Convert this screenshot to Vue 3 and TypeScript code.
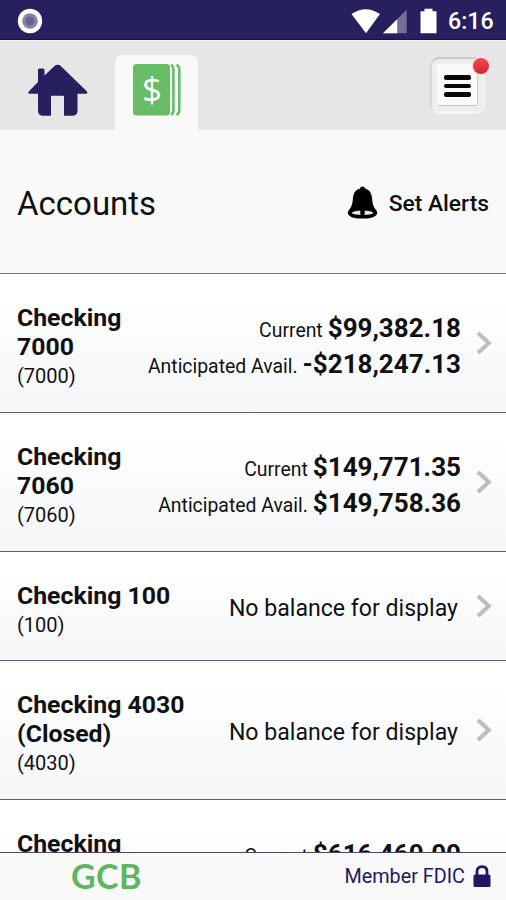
<script setup lang="ts">
interface Balance {
  label: string
  amount: string
}
interface Account {
  name: string[]
  number: string
  balances: Balance[]
}

const accounts: Account[] = [
  {
    name: ['Checking', '7000'],
    number: '(7000)',
    balances: [
      { label: 'Current', amount: '$99,382.18' },
      { label: 'Anticipated Avail.', amount: '-$218,247.13' },
    ],
  },
  {
    name: ['Checking', '7060'],
    number: '(7060)',
    balances: [
      { label: 'Current', amount: '$149,771.35' },
      { label: 'Anticipated Avail.', amount: '$149,758.36' },
    ],
  },
  { name: ['Checking 100'], number: '(100)', balances: [] },
  { name: ['Checking 4030', '(Closed)'], number: '(4030)', balances: [] },
  {
    name: ['Checking'],
    number: '',
    balances: [{ label: 'Current', amount: '$616,460.00' }],
  },
]
</script>

<template>
  <div class="screen">
    <header class="status">
      <svg class="record" width="26" height="26" viewBox="0 0 26 26">
        <circle cx="13" cy="13" r="12.2" fill="#fff" />
        <circle cx="13" cy="13" r="7.8" fill="#8984ae" />
        <circle cx="13" cy="13" r="4.5" fill="#68628f" />
      </svg>
      <svg class="signals" width="88" height="26" viewBox="0 0 88 26">
        <path d="M.5 6Q14.500-3.500 29 6L15 25.200Z" fill="#fff" />
        <path d="M55.700 1.800V25.300H32Z" fill="#767099" />
        <path d="M46.200 11.200V25.300H32Z" fill="#fff" />
        <path d="M73.500 .8h8v2.500h4v22H69.500v-22h4Z" fill="#fff" />
      </svg>
      <span class="clock">6:16</span>
    </header>

    <nav class="tabs">
      <div class="home">
        <svg width="60" height="53" viewBox="0 0 60 53">
          <path
            d="M30 .8Q31.500.8 33 2.200L59 27.500Q60 29.800 57.500 29.800H49.500V46.500Q49.500 51.800 44 51.800H36V33Q36 31.800 34.800 31.800H24.200Q23 31.800 23 33V51.800H15.500Q10 51.800 10 46.500V29.800H1.500Q-.8 29.500 1 27.200L10 18V6Q10 4.500 11.500 4.500H15Q16.500 4.500 16.500 6V11.500L26.500 2Q28 .8 30 .8Z"
            fill="#26205f"
          />
        </svg>
      </div>
      <div class="tab">
        <svg width="48" height="52" viewBox="0 0 48 52">
          <rect width="37" height="51.500" rx="3.500" fill="#67bd66" />
          <path d="M38 .8Q40.400 2 40.400 5V46.500Q40.400 49.500 38 50.700M43.500 .8Q46.300 2 46.300 5V46.500Q46.300 49.500 43.500 50.700" fill="none" stroke="#67bd66" stroke-width="2.600" />
          <text x="19" y="37.500" text-anchor="middle" class="dollar">$</text>
        </svg>
      </div>
      <div class="menu">
        <div class="menu-face"><i /><i /><i /></div>
        <span class="badge" />
      </div>
    </nav>

    <section class="heading">
      <h1>Accounts</h1>
      <div class="alerts">
        <svg width="31" height="33" viewBox="0 0 31 33">
          <path
            d="M15.500.5C14 .5 13.200 1.400 13 2.600C8 4 6.300 8 5.900 13C5.500 18 4.500 21 2 24C.6 25.700.5 27.200 1.200 28.500C3.500 31.800 9 32.600 15.500 32.600S27.500 31.800 29.800 28.500C30.500 27.200 30.400 25.700 29 24C26.500 21 25.500 18 25.100 13C24.700 8 23 4 18 2.600C17.800 1.400 17 .5 15.500.5Z"
            fill="#000"
          />
          <path d="M4.500 27Q6 24.500 15.500 24.500T26.500 27Q24.500 28.900 15.500 28.900T4.500 27Z" fill="#e8e8e8" />
          <path d="M13.300 24h4.400v4.500q-2.200 1.500-4.400 0Z" fill="#000" />
        </svg>
        <span>Set Alerts</span>
      </div>
    </section>

    <main class="list">
      <article v-for="(account, i) in accounts" :key="i" class="row" :class="{ short: !account.balances.length && account.name.length === 1 }">
        <div class="who">
          <strong v-for="part in account.name" :key="part">{{ part }}</strong>
          <span v-if="account.number">{{ account.number }}</span>
        </div>
        <div class="money">
          <p v-for="b in account.balances" :key="b.label">
            <span class="label">{{ b.label }}</span>
            <b>{{ b.amount }}</b>
          </p>
          <p v-if="!account.balances.length" class="none">No balance for display</p>
        </div>
        <svg class="chevron" width="16" height="24" viewBox="0 0 16 24">
          <path d="M2 2L12.800 12L2 22" fill="none" stroke="#bdbdbd" stroke-width="4" />
        </svg>
      </article>
    </main>

    <footer class="footer">
      <span class="brand">GCB</span>
      <div class="member">
        <span>Member FDIC</span>
        <svg width="18" height="23" viewBox="0 0 18 23">
          <path d="M4 11V6.500Q4 1.700 9 1.700T14 6.500V11" fill="none" stroke="#1e1762" stroke-width="2.800" />
          <rect x=".5" y="9.500" width="17" height="12.500" rx="1.500" fill="#1e1762" />
        </svg>
      </div>
    </footer>
  </div>
</template>

<style>
body {
  margin: 0;
  overflow: hidden;
}
</style>

<style scoped>
.screen {
  width: 506px;
  height: 900px;
  display: flex;
  flex-direction: column;
  overflow: hidden;
  background: #f9f9f9;
  color: #111;
  font-family: Roboto, 'Liberation Sans', sans-serif;
}
.status {
  flex: none;
  height: 40px;
  box-sizing: border-box;
  border-bottom: 1px solid #17104f;
  background: #26205f;
  display: flex;
  align-items: center;
  padding: 0 12px 0 17px;
}
.record {
  margin-top: 2px;
}
.signals {
  margin: 3px 0 0 auto;
}
.clock {
  margin: 3px 0 0 9px;
  width: 46px;
  color: #fff;
  font-size: 23.2px;
  font-weight: 500;
  line-height: 28px;
  white-space: nowrap;
}
.tabs {
  flex: none;
  height: 90px;
  background: #e6e6e6;
  box-sizing: border-box;
  border-top: 1px solid #f4f4f4;
  display: flex;
}
.home {
  padding: 23px 0 0 28px;
  width: 87px;
}
.tab {
  width: 83px;
  height: 75px;
  margin-top: 14px;
  box-sizing: border-box;
  padding: 9px 0 0 18px;
  border-radius: 7px 7px 0 0;
  background: #f9f9f9;
}
.dollar {
  font-family: 'Open Sans', sans-serif;
  font-size: 35px;
  fill: #fff;
}
.menu {
  position: relative;
  width: 55px;
  height: 57px;
  box-sizing: border-box;
  margin: 16px 21px 0 auto;
  padding: 6px;
  border-radius: 9px;
  background: #eee;
  border: 2px solid #f4f4f4;
  border-top-color: #c9c9c9;
  border-left-color: #d8d8d8;
}
.menu-face {
  height: 42px;
  margin-top: -1px;
  width: 41px;
  margin-left: -1px;
  box-sizing: border-box;
  border: 1px solid #fff;
  border-right-color: #ccc;
  border-bottom-color: #c4c4c4;
  border-radius: 3px;
  background: #f9f9f9;
  padding-top: 2px;
  display: flex;
  flex-direction: column;
  align-items: center;
  justify-content: center;
  gap: 4.4px;
}
.menu-face i {
  width: 27px;
  height: 4.200px;
  border-radius: 2px;
  background: #080808;
}
.badge {
  position: absolute;
  right: -6px;
  top: -1px;
  width: 16px;
  height: 16px;
  border-radius: 50%;
  background: linear-gradient(#f04c52, #db2530);
  box-shadow: 0 0 0 1.500px #f7e3e3;
}
.heading {
  flex: none;
  height: 144px;
  box-sizing: border-box;
  border-bottom: 1px solid #716c88;
  display: flex;
  align-items: center;
  justify-content: space-between;
  padding: 4px 17px 0;
}
h1 {
  margin: 0;
  font-size: 33px;
  font-weight: 400;
}
.alerts {
  display: flex;
  align-items: center;
  gap: 11px;
  font-size: 22.8px;
  font-weight: 500;
}
.alerts svg {
  margin-top: -3px;
}
.list {
  flex: 1;
  min-height: 0;
  overflow: hidden;
}
.row {
  height: 139px;
  box-sizing: border-box;
  border-bottom: 1px solid #615b80;
  background: linear-gradient(#fff 15%, #f4f6f8);
  display: flex;
  align-items: center;
  padding: 0 14px 0 17px;
}
.row.short {
  height: 109px;
}
.who {
  align-self: flex-start;
  padding-top: 29px;
  display: flex;
  flex-direction: column;
  line-height: 29px;
}
.who strong {
  font-size: 24.8px;
  font-weight: 700;
  white-space: nowrap;
}
.who span {
  font-size: 20px;
  line-height: 31px;
}
.money {
  margin-left: auto;
  padding-top: 5px;
}
.row:last-child .money {
  padding-bottom: 36px;
}
.money p {
  margin: 0;
  height: 36px;
  display: flex;
  align-items: baseline;
  justify-content: flex-end;
  line-height: 36px;
  white-space: nowrap;
}
.money .label {
  font-size: 19.4px;
  line-height: 24px;
}
.money b {
  font-size: 26px;
  margin-left: 5px;
}
.money .none {
  font-size: 23.100px;
  margin-right: 3px;
  padding-top: 1px;
}
.chevron {
  margin-left: 15px;
}
.footer {
  flex: none;
  height: 48px;
  box-sizing: border-box;
  border-top: 1px solid #4e4870;
  display: flex;
  align-items: center;
  justify-content: space-between;
  padding: 0 15px 0 71px;
}
.brand {
  font-family: Lato, 'Liberation Sans', sans-serif;
  font-weight: 700;
  font-size: 34px;
  letter-spacing: 0.4px;
  line-height: 40px;
  margin-top: -2px;
  color: #5eb660;
}
.member {
  display: flex;
  align-items: center;
  gap: 8px;
  color: #1e1762;
  font-size: 19.8px;
}
</style>
